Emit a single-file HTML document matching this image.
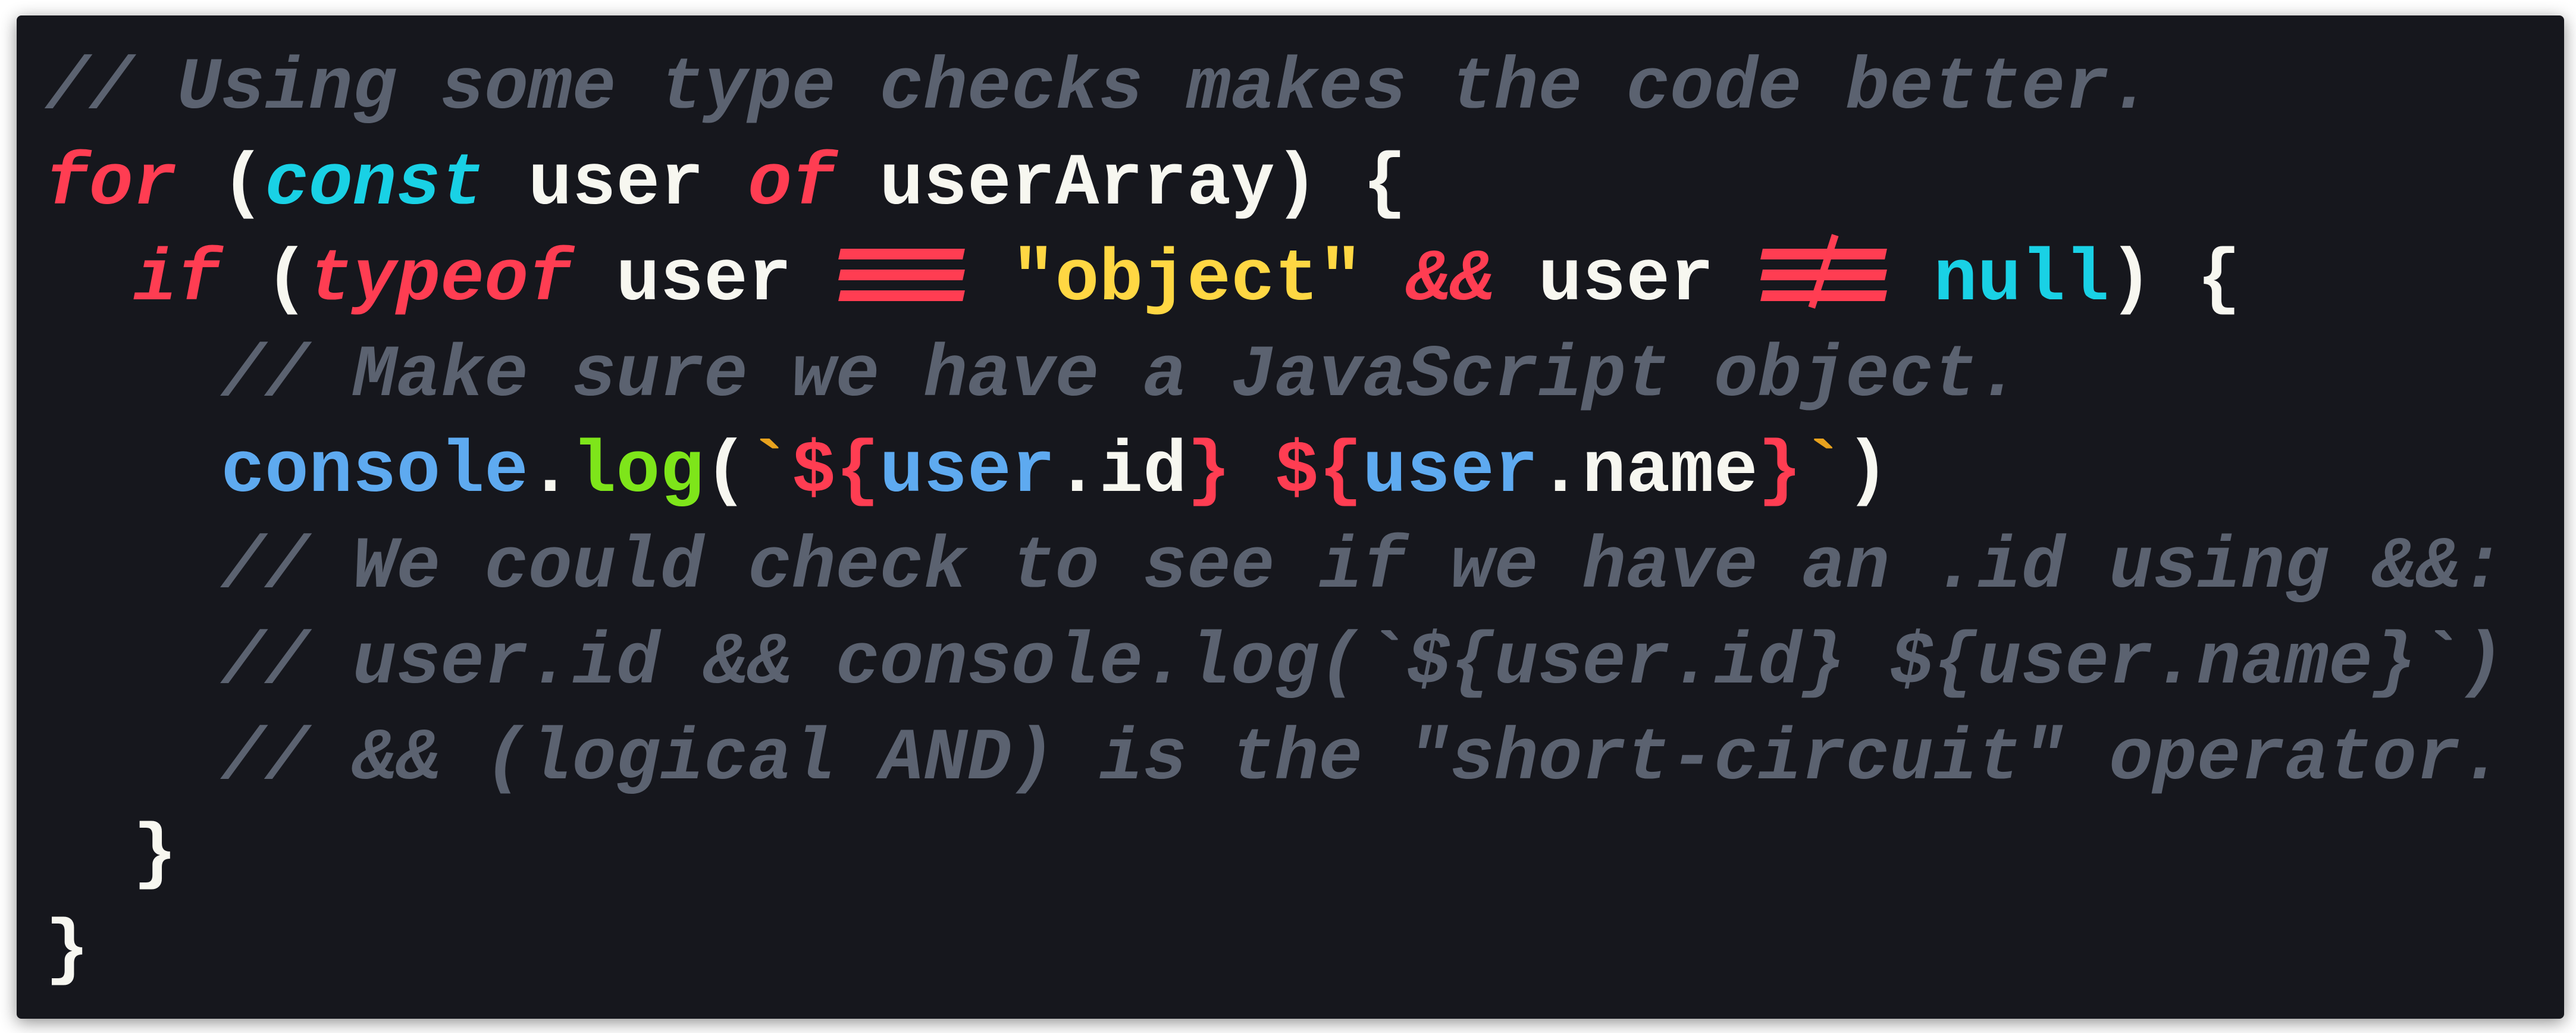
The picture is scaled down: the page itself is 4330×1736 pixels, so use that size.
<!DOCTYPE html>
<html><head><meta charset="utf-8"><style>
html,body{margin:0;padding:0;background:#fff;width:4330px;height:1736px;overflow:hidden}
.box{position:absolute;left:28px;top:26px;width:4282px;height:1686px;background:#16171d;border-radius:8px;box-shadow:0 6px 28px rgba(0,0,0,.45)}
pre{position:absolute;left:48px;top:42px;margin:0;font-family:"Liberation Mono",monospace;font-size:123px;line-height:161px;font-weight:bold;color:#f7f7f0;white-space:pre}
.c{color:#5b6270;font-style:italic}
.k{color:#ff3d52;font-style:italic}
.cy{color:#19d1e5;font-style:italic}
.s{color:#ffd743}
.b{color:#5eaaf0}
.g{color:#7ee51a}
.r{color:#ff3d52}
.o{color:#e8a21e}
.lig{position:relative;display:inline-block;color:transparent}
.lig i{position:absolute;left:6px;right:6px;height:18px;background:#ff3d52;transform:skewX(-12deg)}
.lig em{position:absolute;left:50%;top:2px;width:12px;height:128px;background:#ff3d52;transform:rotate(18deg);margin-left:-6px}
</style></head><body>
<div class="box"><pre><span class="c">// Using some type checks makes the code better.</span>
<span class="k">for</span> (<span class="cy">const</span> user <span class="k">of</span> userArray) {
  <span class="k">if</span> (<span class="k">typeof</span> user <span class="lig">===<i style="top:28px"></i><i style="top:63px"></i><i style="top:98px"></i></span> <span class="s">"object"</span> <span class="k">&amp;&amp;</span> user <span class="lig">!==<i style="top:28px"></i><i style="top:63px"></i><i style="top:98px"></i><em></em></span> <span class="cy" style="font-style:normal">null</span>) {
    <span class="c">// Make sure we have a JavaScript object.</span>
    <span class="b">console</span>.<span class="g">log</span>(<span class="o">`</span><span class="r">${</span><span class="b">user</span>.id<span class="r">}</span> <span class="r">${</span><span class="b">user</span>.name<span class="r">}</span><span class="o">`</span>)
    <span class="c">// We could check to see if we have an .id using &amp;&amp;:</span>
    <span class="c">// user.id &amp;&amp; console.log(`${user.id} ${user.name}`)</span>
    <span class="c">// &amp;&amp; (logical AND) is the "short-circuit" operator.</span>
  }
}</pre></div>
</body></html>
